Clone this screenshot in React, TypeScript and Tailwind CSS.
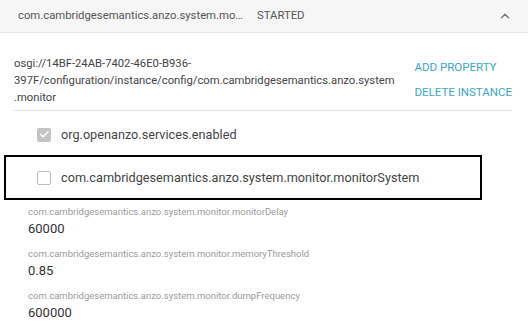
import React from 'react';
import {ChevronUp, Check} from 'lucide-react';

const fields = [
    {label: 'com.cambridgesemantics.anzo.system.monitor.monitorDelay', value: '60000'},
    {label: 'com.cambridgesemantics.anzo.system.monitor.memoryThreshold', value: '0.85'},
    {label: 'com.cambridgesemantics.anzo.system.monitor.dumpFrequency', value: '600000'},
];

const Box = ({checked}: {checked: boolean}) =>
    checked ? (
        <span className="w-[14px] h-[14px] rounded-[2px] bg-[#c4c4c4] flex items-center justify-center">
            <Check className="w-[11px] h-[11px] text-white" strokeWidth={3}/>
        </span>
    ) : (
        <span className="w-[14px] h-[14px] rounded-[2px] border border-[#bdbdbd] bg-white"/>
    );

export default function App() {
    return (
        <div className="w-[528px] h-[327px] bg-white overflow-hidden" style={{fontFamily: 'Roboto, "Liberation Sans", sans-serif'}}>
            {/* header */}
            <div className="h-[33px] bg-[#f6f6f6] border-b border-[#e6e6e6] flex items-center pl-[18px] pr-[16px] text-[11.3px] text-[#555]">
                <span className="w-[239px] whitespace-nowrap">com.cambridgesemantics.anzo.system.mo…</span>
                <span>STARTED</span>
                <ChevronUp className="ml-auto w-[14px] h-[14px] text-[#777]" strokeWidth={2.5}/>
            </div>

            {/* instance */}
            <div className="ml-[14px] mr-[16px] pt-[22px] pb-[4px] border-b border-[#e4e4e4] flex">
                <div className="flex-1 text-[11.25px] leading-[17px] text-[#444]">
                    osgi://14BF-24AB-7402-46E0-B936-<br/>
                    397F/configuration/instance/config/com.cambridgesemantics.anzo.system<br/>
                    .monitor
                </div>
                <div className="flex flex-col items-start gap-[11px] pt-[5px] text-[11.5px] leading-[14px] text-[#3aa7c1]">
                    <span>ADD PROPERTY</span>
                    <span>DELETE INSTANCE</span>
                </div>
            </div>

            <div className="pt-[3px] h-[44px] flex items-center pl-[37px]">
                <Box checked/>
                <span className="ml-[10px] text-[12.7px] text-[#444]">org.openanzo.services.enabled</span>
            </div>
            <div className="ml-[4px] w-[478px] h-[45px] border-2 border-black flex items-center pl-[31px]">
                <Box checked={false}/>
                <span className="ml-[10px] text-[12.7px] text-[#444]">com.cambridgesemantics.anzo.system.monitor.monitorSystem</span>
            </div>

            <div className="pl-[28px] pt-[5px] flex flex-col">
                {fields.map((f) => (
                    <div key={f.label} className="h-[42px]">
                        <div className="text-[9.5px] leading-[14px] text-[#9a9a9a]">{f.label}</div>
                        <div className="text-[13px] leading-[20px] text-[#333]">{f.value}</div>
                    </div>
                ))}
            </div>
        </div>
    );
}
